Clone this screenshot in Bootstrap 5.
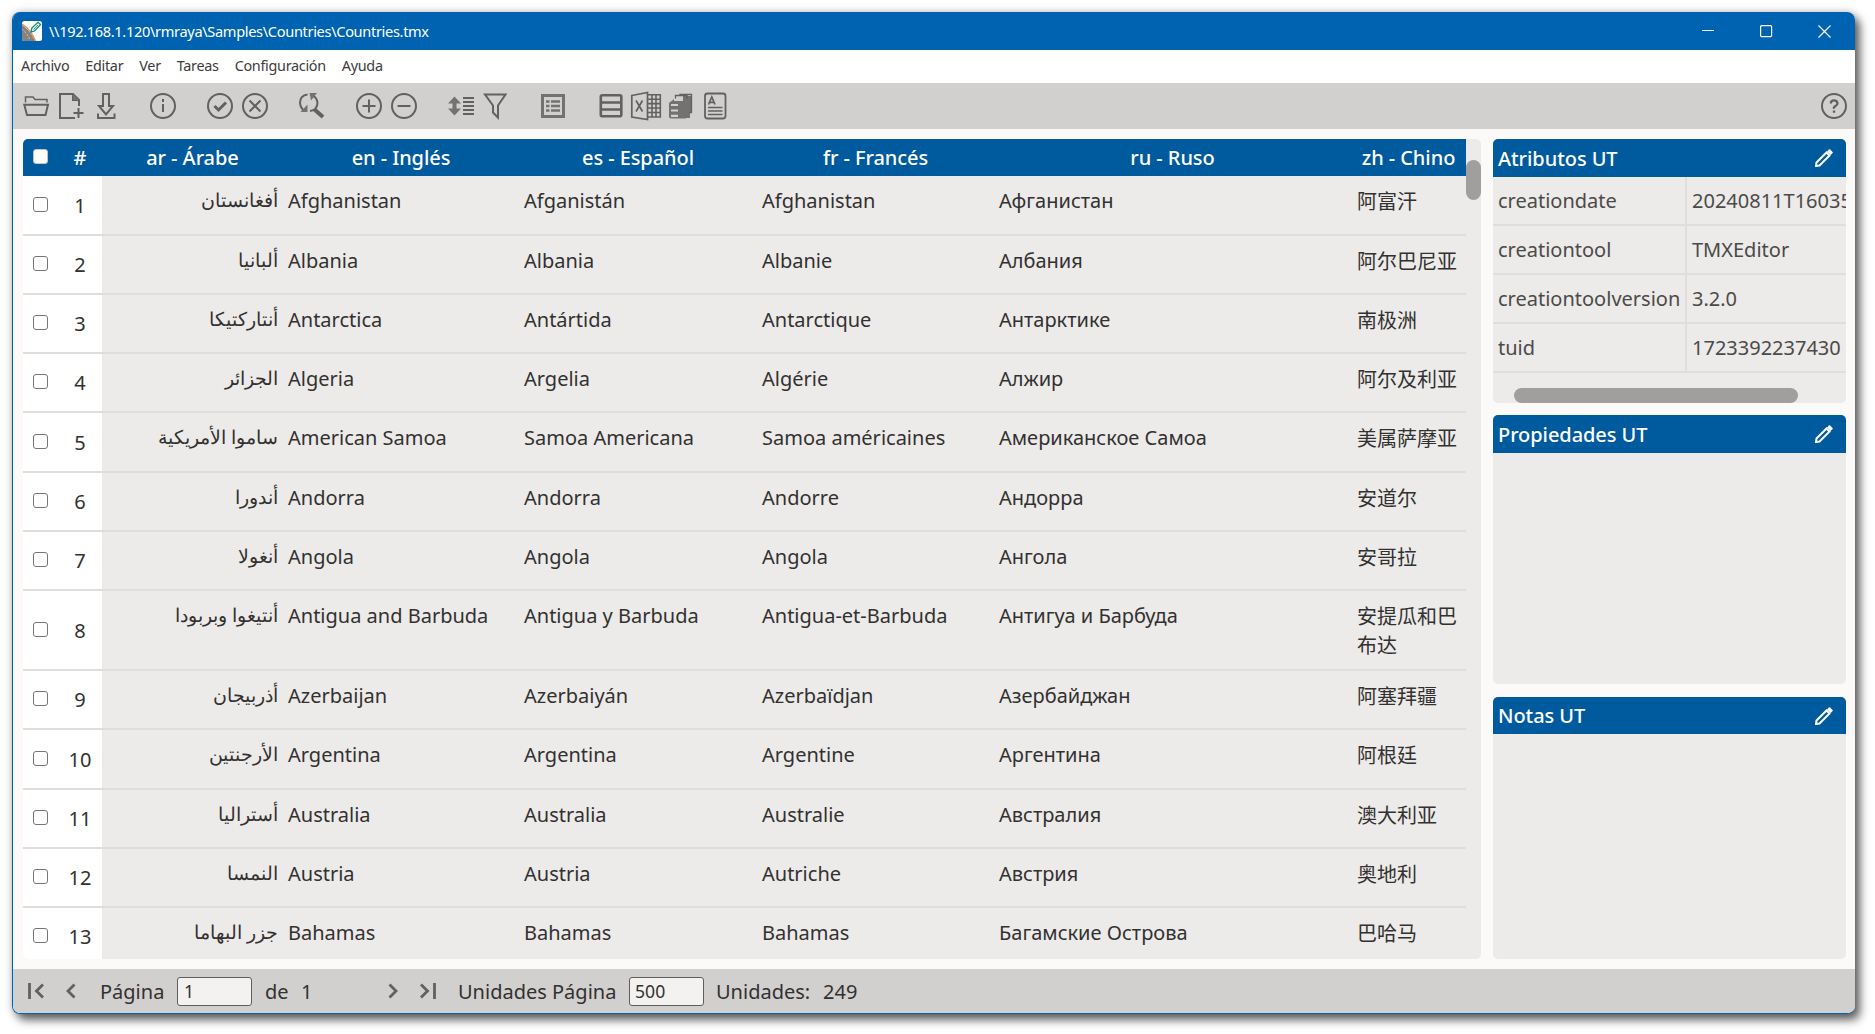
<!DOCTYPE html>
<html lang="es">
<head>
<meta charset="utf-8">
<title>TMXEditor</title>
<link href="https://cdn.jsdelivr.net/npm/bootstrap@5.3.0/dist/css/bootstrap.min.css" rel="stylesheet">
<style>
html,body{height:100%;overflow:hidden;background:#fff}
body{font-family:"Noto Sans","Noto Sans CJK SC",sans-serif;font-size:20px;line-height:29px;color:#323130;padding:12px 20px 20px 12px}
.app-window{height:1002px;border:1px solid #0063b1;border-top:0;border-right:0;border-radius:8px;overflow:hidden;background:#fbfaf8;box-shadow:0 0 9px rgba(0,0,0,.22),5px 6px 10px rgba(0,0,0,.6)}
.title-bar{height:38px;background:#0063b1;color:#fff;padding-left:9px;padding-right:24px;font-size:15px}
.title-text{margin-left:7px;font-size:14.6px;letter-spacing:-.34px}
.win-btns{gap:45px}
.menu-bar{height:33px;background:#fff;padding:0 0 2px 8px;gap:16px;font-size:14.4px;letter-spacing:-.3px;color:#3c3c3c}
.menu-bar a{color:inherit;text-decoration:none}
.tool-bar{height:46px;background:#d2d0ce;padding:0 3px 0 5px;gap:22px}
svg{display:block;flex:none}
.ico{fill:none;stroke:#62615f;stroke-width:2}
.ico .f{fill:#737270;stroke:none}
.work{height:840px;padding:10px 9px 10px 10px;gap:12px}
.grid-box{width:1458px;background:#ecebe9;border-radius:5px;overflow:hidden}
.grid-table{width:1443px;table-layout:fixed;border-collapse:separate;border-spacing:0}
.grid-table th{height:37px;padding:0 5px;background:#005a9e;color:#fff;font-weight:500;letter-spacing:-.07px;text-align:center;line-height:29px}
.grid-table td{height:59px;padding:10px 5px 0;vertical-align:top;border-bottom:2px solid #dfdedc}
.grid-table td[lang=ar]{font-size:18.8px}
.grid-table td[lang=zh]{padding:11px 4px 0 6px}
.grid-table .r60 td{height:60px}
.grid-table .r80 td{height:80px}
.grid-table td.sel,.grid-table td.num{background:#fff;text-align:center;vertical-align:middle;padding:0}
.cb{width:15px;height:15px;border:1.5px solid #767676;border-radius:3px;background:#fff;margin:0 auto;position:static}
th .cb{border-color:#c4c4c4;margin-top:-2px}
td .cb{margin-top:-2px}
.v-track{width:15px;padding-top:21px}
.v-thumb{height:40px;border-radius:8px;background:#a19f9d}
.side{width:353px}
.pane{background:#ecebe9;border-radius:5px;overflow:hidden}
.pane-a{height:264px;margin-bottom:12px}
.pane-b{height:269px;margin-bottom:13px}
.pane-c{height:262px}
.pane-head{height:38px;background:#005a9e;color:#fff;font-weight:500;letter-spacing:-.07px;padding:0 13px 0 5px}
.pane-c .pane-head{height:37px}
.attr{height:49px;border-bottom:2px solid #dfdedc;color:#4b4a48;line-height:47px;white-space:nowrap}
.attr-k{width:194px;border-right:2px solid #dfdedc;padding-left:5px;flex:none}
.attr-v{padding-left:5px}
.h-thumb{width:284px;height:15px;margin:15px 0 0 21px;border-radius:8px;background:#a19f9d}
.foot{height:44px;background:#d2d0ce;padding-left:15px}
.foot span{white-space:pre}
.foot input{width:75px;height:29px;border:1px solid #605e5c;border-radius:3px;background:#f3f2f0;font-size:17.600px;padding:1px 6px 0;color:#323130;font-family:inherit}
.foot input.units-per-page{padding-left:5px}
</style>
<script src="https://cdn.jsdelivr.net/npm/bootstrap@5.3.0/dist/js/bootstrap.bundle.min.js"></script>
</head>
<body>
<div class="app-window d-flex flex-column">
  <div class="title-bar d-flex align-items-center flex-shrink-0">
    <svg width="20" height="20" viewBox="0 0 20 20"><rect width="20" height="20" rx="2.500" fill="#fff"/><path d="M0 4Q8 9 13 20H2Q0 20 0 18Z" fill="#85827f"/><path d="M0 8Q5 12 8 19" fill="none" stroke="#c9c7c5" stroke-dasharray="2 1.500"/><path d="M0 3Q8.500 8 13.500 20" fill="none" stroke="#e98a45" stroke-width="1.400"/><path d="M9 11l.8-4L16 1.300 18.500 3.600 12.500 10Z" fill="#e2f5f1" stroke="#13897b" stroke-width="1.300"/><path d="M11.500 8.500L16 4" stroke="#13897b" stroke-width=".8"/></svg>
    <div class="title-text">\\192.168.1.120\rmraya\Samples\Countries\Countries.tmx</div>
    <div class="win-btns d-flex ms-auto">
      <svg width="13" height="13" viewBox="0 0 13 13"><path d="M0 5.500H12" stroke="#fff"/></svg>
      <svg width="13" height="13" viewBox="0 0 13 13"><rect x=".6" y=".6" width="11" height="11" rx="1" fill="none" stroke="#fff" stroke-width="1.200"/></svg>
      <svg width="13" height="13" viewBox="0 0 13 13"><path d="M.5 .5l12 12M12.500 .5l-12 12" stroke="#fff" stroke-width="1.200"/></svg>
    </div>
  </div>
  <nav class="menu-bar d-flex align-items-center flex-shrink-0">
    <a href="#">Archivo</a><a href="#">Editar</a><a href="#">Ver</a><a href="#">Tareas</a><a href="#">Configuración</a><a href="#">Ayuda</a>
  </nav>
  <div class="tool-bar d-flex align-items-center flex-shrink-0">
    <div class="d-flex">
      <svg class="ico" width="35" height="30" viewBox="18 91 35 30"><path d="M25.500 102.500V97H33l2 2.500H47V102.500" stroke-width="1.500"/><path d="M24.300 104.800H48L45.500 115H27Z"/></svg>
      <svg class="ico" width="35" height="30" viewBox="53 91 35 30"><path d="M75 118H60V94H73L79 100V106M73 94v6h6M78.500 108v10M73.500 113h10"/><path class="f" d="M73 94l6 6h-6Z"/></svg>
      <svg class="ico" width="35" height="30" viewBox="88 91 35 30"><path d="M103 94H109V106H113L106 114.500L99 106H103ZM98 113.500v4.500H114.500V113.500"/></svg>
    </div>
    <svg class="ico" width="35" height="30" viewBox="145 91 35 30"><circle cx="163" cy="106" r="12"/><path d="M163 104v8M163 99v3"/></svg>
    <div class="d-flex">
      <svg class="ico" width="35" height="30" viewBox="202 91 35 30"><circle cx="220" cy="106" r="12"/><path d="M214.500 106l4 4 7.500-7.500" stroke-width="3"/></svg>
      <svg class="ico" width="35" height="30" viewBox="237 91 35 30"><circle cx="255" cy="106" r="12"/><path d="M249.500 100.500l11 11M260.500 100.500l-11 11"/></svg>
    </div>
    <svg class="ico" width="35" height="30" viewBox="294 91 35 30"><path d="M307.500 94.500Q300 95.500 300 103Q300 106.500 303 110M310 111Q317.500 110 317.500 102.500Q317 98 313.500 96"/><path class="f" d="M309.500 93H317L311 100.500ZM300.500 112H307.500V104.500Z"/><path d="M314.500 109.500L323 117" stroke-width="4"/></svg>
    <div class="d-flex">
      <svg class="ico" width="35" height="30" viewBox="351 91 35 30"><circle cx="369" cy="106" r="12"/><path d="M362.500 106h13M369 99.500v13"/></svg>
      <svg class="ico" width="35" height="30" viewBox="386 91 35 30"><circle cx="404" cy="106" r="12"/><path d="M397.500 106h13"/></svg>
    </div>
    <div class="d-flex">
      <svg class="ico" width="35" height="30" viewBox="443 91 35 30"><path class="f" d="M454.500 96.500L461 103.500H456.500V108.500H461L454.500 115.500L448 108.500H452.500V103.500H448Z"/><path d="M463 98h11M463 102h11M463 106h11M463 110h11M463 114h11" stroke-width="1.800"/></svg>
      <svg class="ico" width="35" height="30" viewBox="478 91 35 30"><path d="M485 94.500H505.500L498 105.500V117.500L493 112.500V105.500Z"/></svg>
    </div>
    <svg class="ico" width="35" height="30" viewBox="535 91 35 30"><rect x="542.500" y="95.500" width="21" height="21" stroke-width="3" stroke="#737270"/><path d="M546 101.500h3.500M551 101.500h9M546 106h3.500M551 106h9M546 110.500h3.500M551 110.500h9" stroke-width="2.500" stroke="#737270"/></svg>
    <div class="d-flex">
      <svg class="ico" width="35" height="30" viewBox="592 91 35 30"><rect x="600.800" y="95.300" width="20.500" height="21" rx="1.500" stroke-width="2.600"/><path d="M601 102.500h20M601 109.500h20" stroke-width="2.600"/></svg>
      <svg class="ico" width="35" height="30" viewBox="627 91 35 30"><path d="M631.800 95.500L647.500 92.500V119.500L631.800 117ZM636 100.500l6.500 11M642.500 100.500l-6.500 11" stroke-width="1.700"/><path d="M648 94.700H660.300V117H648M648 99.200h12M648 103.600h12M648 108h12M648 112.500h12M652 95v22M656 95v22" stroke-width="1.600"/></svg>
      <svg class="ico" width="35" height="30" viewBox="662 91 35 30"><path class="f" d="M683 96H692V112H690V118H683Z"/><path class="f" d="M669 103L674 99V101H686V118.500H671Q669 118.500 669 116.500Z"/><path d="M675.500 98.500V95.500H687V99M680 95V94.500H691.500V112.500H689" stroke-width="1.300"/><path d="M671 105h7M671 110.500h7M671 115.800h7" stroke="#d2d0ce" stroke-width="2.200"/></svg>
      <svg class="ico" width="35" height="30" viewBox="697 91 35 30"><rect x="705" y="93.500" width="20.500" height="25" rx="2.500" stroke-width="1.800"/><path d="M708.500 104.500L711.800 97L715 104.500M709.500 102.300h4.500M708 107.500h14.500M708 111h14.500M708 114.500h14.500" stroke-width="1.700"/></svg>
    </div>
    <svg class="ico ms-auto" width="35" height="30" viewBox="1817 91 35 30"><circle cx="1834" cy="106" r="12"/><path d="M1830.800 103.500Q1830.800 100.300 1834 100.300T1837.500 103.300Q1837.500 105 1835.500 106T1834 108.800M1834 110.500v2.200" stroke-width="2.300"/></svg>
  </div>
  <main class="work d-flex flex-shrink-0">
    <section class="grid-box d-flex flex-shrink-0">
      <table class="grid-table">
        <colgroup><col style="width:35px"><col style="width:44px"><col style="width:181px"><col style="width:236px"><col style="width:238px"><col style="width:237px"><col style="width:357px"><col style="width:115px"></colgroup>
        <thead><tr><th><div class="cb"></div></th><th>#</th><th>ar - Árabe</th><th>en - Inglés</th><th>es - Español</th><th>fr - Francés</th><th>ru - Ruso</th><th>zh - Chino</th></tr></thead>
        <tbody id="units"></tbody>
      </table>
      <div class="v-track"><div class="v-thumb"></div></div>
    </section>
    <aside class="side">
      <div class="pane pane-a">
        <div class="pane-head d-flex align-items-center justify-content-between">Atributos UT<svg width="18" height="18" viewBox="0 0 18 18"><use href="#pen"/></svg></div>
        <div class="attr d-flex"><div class="attr-k">creationdate</div><div class="attr-v">20240811T160357Z</div></div>
        <div class="attr d-flex"><div class="attr-k">creationtool</div><div class="attr-v">TMXEditor</div></div>
        <div class="attr d-flex"><div class="attr-k">creationtoolversion</div><div class="attr-v">3.2.0</div></div>
        <div class="attr d-flex"><div class="attr-k">tuid</div><div class="attr-v">1723392237430</div></div>
        <div class="h-thumb"></div>
      </div>
      <div class="pane pane-b">
        <div class="pane-head d-flex align-items-center justify-content-between">Propiedades UT<svg width="18" height="18" viewBox="0 0 18 18"><use href="#pen"/></svg></div>
      </div>
      <div class="pane pane-c">
        <div class="pane-head d-flex align-items-center justify-content-between">Notas UT<svg width="18" height="18" viewBox="0 0 18 18"><defs><g id="pen"><path d="M1 17l.5-3.500L11.500 3.500l3 3L4.500 16.500Z" fill="none" stroke="#fff" stroke-width="2"/><path d="M12 2.400L14 .4Q14.500 0 15 .4L17.600 3Q18 3.500 17.600 4L15.600 6Z" fill="#fff"/></g></defs><use href="#pen"/></svg></div>
      </div>
    </aside>
  </main>
  <footer class="foot d-flex align-items-center flex-shrink-0">
    <svg class="ico" width="17" height="18" viewBox="28 983 17 18"><path d="M29.500 984v16M43 985.500l-6.500 6.500 6.500 6.500" stroke-width="2.800"/></svg>
    <svg class="ico" style="margin-left:21px" width="10" height="18" viewBox="66 983 10 18"><path d="M74.500 985.500L68 992l6.500 6.500" stroke-width="2.800"/></svg>
    <span style="margin-left:24px;width:77px">Página</span>
    <input type="text" value="1">
    <span style="margin-left:13px;width:36px">de</span>
    <span style="width:87px">1</span>
    <svg class="ico" width="10" height="18" viewBox="388 983 10 18"><path d="M389.500 985.500L396 992l-6.500 6.500" stroke-width="2.800"/></svg>
    <svg class="ico" style="margin-left:22px" width="17" height="18" viewBox="420 983 17 18"><path d="M434.500 984v16M421 985.500l6.500 6.500-6.500 6.500" stroke-width="2.800"/></svg>
    <span style="margin-left:21px;width:171px">Unidades Página</span>
    <input class="units-per-page" type="text" value="500">
    <span style="margin-left:12px;width:107px">Unidades:</span>
    <span>249</span>
  </footer>
</div>
<script>
const units = [
 ["أفغانستان","Afghanistan","Afganistán","Afghanistan","Афганистан","阿富汗"],
 ["ألبانيا","Albania","Albania","Albanie","Албания","阿尔巴尼亚"],
 ["أنتاركتيكا","Antarctica","Antártida","Antarctique","Антарктике","南极洲"],
 ["الجزائر","Algeria","Argelia","Algérie","Алжир","阿尔及利亚"],
 ["ساموا الأمريكية","American Samoa","Samoa Americana","Samoa américaines","Американское Самоа","美属萨摩亚"],
 ["أندورا","Andorra","Andorra","Andorre","Андорра","安道尔"],
 ["أنغولا","Angola","Angola","Angola","Ангола","安哥拉"],
 ["أنتيغوا وبربودا","Antigua and Barbuda","Antigua y Barbuda","Antigua-et-Barbuda","Антигуа и Барбуда","安提瓜和巴布达"],
 ["أذربيجان","Azerbaijan","Azerbaiyán","Azerbaïdjan","Азербайджан","阿塞拜疆"],
 ["الأرجنتين","Argentina","Argentina","Argentine","Аргентина","阿根廷"],
 ["أستراليا","Australia","Australia","Australie","Австралия","澳大利亚"],
 ["النمسا","Austria","Austria","Autriche","Австрия","奥地利"],
 ["جزر البهاما","Bahamas","Bahamas","Bahamas","Багамские Острова","巴哈马"]
];
const langs = ["ar","en","es","fr","ru","zh"];
const heights = {1:"r60",5:"r60",8:"r80",10:"r60"};
document.getElementById("units").innerHTML = units.map((u,i)=>
 `<tr class="${heights[i+1]||""}"><td class="sel"><div class="cb"></div></td><td class="num">${i+1}</td>` +
 u.map((t,k)=>`<td lang="${langs[k]}"${k?"":' dir="rtl"'}>${t}</td>`).join("") + "</tr>").join("");
</script>
</body>
</html>
